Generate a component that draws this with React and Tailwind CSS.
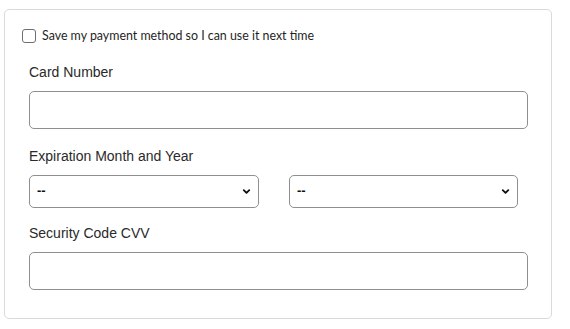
import { ChevronDown } from 'lucide-react';

function Select({ className }) {
  return (
    <div className={`relative h-[33px] ${className}`}>
      <select className="h-full w-full appearance-none rounded-[5px] border border-[#8f8f8f] bg-white pl-[7px] text-[13px] font-bold text-[#111] outline-none" style={{ fontFamily: '"Liberation Sans", Arial, sans-serif' }}>
        <option>--</option>
      </select>
      <ChevronDown className="pointer-events-none absolute right-[7px] top-[11px] h-[11px] w-[11px] text-[#111]" strokeWidth={4} />
    </div>
  );
}

export default function App() {
  return (
    <div className="h-[329px] w-[570px] bg-white pl-[4px] pt-[9px]">
      <div className="h-[310px] w-[548px] rounded-[5px] border border-[#dadada] pl-[24px] pt-[17px]" style={{ fontFamily: '"Liberation Sans", Arial, sans-serif' }}>
        <label className="-ml-[7px] flex items-center gap-[6px]">
          <span className="h-[14px] w-[14px] rounded-[3px] border border-[#6f6f6f] bg-white" />
          <span className="text-[12.4px] text-[#1f1f1f]" style={{ fontFamily: 'Lato, sans-serif' }}>
            Save my payment method so I can use it next time
          </span>
        </label>

        <div className="mt-[18px] text-[14px] leading-[16px] text-[#2a2a2a]">Card Number</div>
        <input className="mt-[11px] block h-[38px] w-[499px] rounded-[5px] border border-[#8f8f8f] bg-white outline-none" />

        <div className="mt-[19px] text-[14px] leading-[16px] text-[#2a2a2a]">Expiration Month and Year</div>
        <div className="mt-[11px] flex gap-[30px]">
          <Select className="w-[230px]" />
          <Select className="w-[229px]" />
        </div>

        <div className="mt-[17px] text-[14px] leading-[16px] text-[#2a2a2a]">Security Code CVV</div>
        <input className="mt-[11px] block h-[38px] w-[499px] rounded-[5px] border border-[#8f8f8f] bg-white outline-none" />
      </div>
    </div>
  );
}
